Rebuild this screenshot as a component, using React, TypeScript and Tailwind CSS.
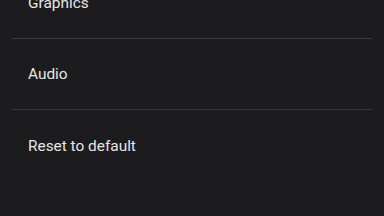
import React from 'react';

const items = ['Graphics', 'Audio', 'Reset to default'];

export default function App() {
    return (
        <div className="w-[384px] h-[216px] overflow-hidden bg-[#1c1c1e]" style={{ fontFamily: "Roboto, 'Noto Sans', sans-serif" }}>
            <div className="mt-[-32px] px-3">
                {items.map((label, i) => (
                    <div
                        key={label}
                        className={`h-[71px] flex items-center px-4 pt-[2px] text-[15.4px] text-[#e6e6e6] ${i < items.length - 1 ? 'border-b border-[#3a3a3c]' : ''}`}
                    >
                        {label}
                    </div>
                ))}
            </div>
        </div>
    );
}
